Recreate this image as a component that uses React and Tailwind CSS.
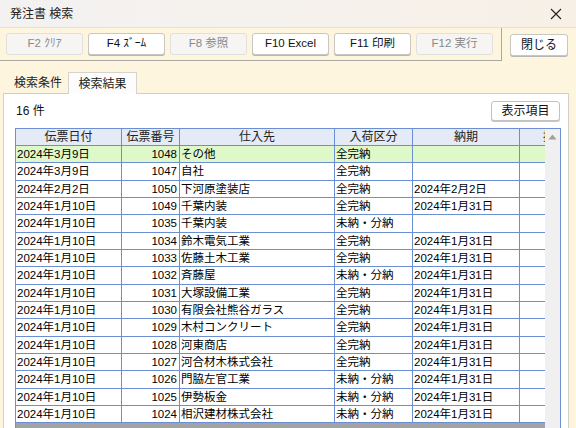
import React from "react";

const rows = [
  ["2024年3月9日", "1048", "その他", "全完納", ""],
  ["2024年3月9日", "1047", "自社", "全完納", ""],
  ["2024年2月2日", "1050", "下河原塗装店", "全完納", "2024年2月2日"],
  ["2024年1月10日", "1049", "千葉内装", "全完納", "2024年1月31日"],
  ["2024年1月10日", "1035", "千葉内装", "未納・分納", ""],
  ["2024年1月10日", "1034", "鈴木電気工業", "全完納", "2024年1月31日"],
  ["2024年1月10日", "1033", "佐藤土木工業", "全完納", "2024年1月31日"],
  ["2024年1月10日", "1032", "斉藤屋", "未納・分納", "2024年1月31日"],
  ["2024年1月10日", "1031", "大塚設備工業", "全完納", "2024年1月31日"],
  ["2024年1月10日", "1030", "有限会社熊谷ガラス", "全完納", "2024年1月31日"],
  ["2024年1月10日", "1029", "木村コンクリート", "全完納", "2024年1月31日"],
  ["2024年1月10日", "1028", "河東商店", "全完納", "2024年1月31日"],
  ["2024年1月10日", "1027", "河合材木株式会社", "全完納", "2024年1月31日"],
  ["2024年1月10日", "1026", "門脇左官工業", "未納・分納", "2024年1月31日"],
  ["2024年1月10日", "1025", "伊勢板金", "未納・分納", "2024年1月31日"],
  ["2024年1月10日", "1024", "相沢建材株式会社", "未納・分納", "2024年1月31日"],
];

const tools = [
  { label: "F2 ｸﾘｱ", off: true },
  { label: "F4 ｽﾞｰﾑ", off: false },
  { label: "F8 参照", off: true },
  { label: "F10 Excel", off: false },
  { label: "F11 印刷", off: false },
  { label: "F12 実行", off: true },
];

function ToolButton({ label, off }) {
  return (
    <div
      className={`w-[77px] h-[22px] flex items-center justify-center rounded-[3px] border text-[11.5px] ${
        off
          ? "bg-[#f6f5f3] border-[#e2e0dc] text-[#8a8a8a]"
          : "bg-white border-[#c9c7c3] text-[#111] shadow-[0_1px_0_#b8b6b2]"
      }`}
    >
      {label}
    </div>
  );
}

export default function App() {
  return (
    <div className="w-[576px] h-[428px] overflow-hidden bg-[#fdf5de] font-['Liberation_Sans','Noto_Sans_CJK_JP',sans-serif] text-[#111]">
      {/* Title bar */}
      <div className="h-[28px] flex items-center justify-between pl-[10px] pr-[14px] bg-gradient-to-r from-[#f3f2f1] to-[#f8f0e7] border-b border-[#e6e1d8]">
        <span className="text-[12px] text-[#222]">発注書 検索</span>
        <svg width="12" height="12" viewBox="0 0 12 12">
          <path d="M1 1L11 11M11 1L1 11" stroke="#222" strokeWidth="1.1" />
        </svg>
      </div>

      {/* Toolbar */}
      <div className="flex">
        <div className="w-[502px] h-[33px] border-r border-b border-[#a9a7a2] flex gap-[5px] pl-[6px] pt-[5px]">
          {tools.map((t) => (
            <ToolButton key={t.label} {...t} />
          ))}
        </div>
        <div className="ml-[8px] mt-[6px] w-[58px] h-[22px] flex items-center justify-center rounded-[3px] border border-[#c9c7c3] bg-white text-[12px] shadow-[0_1px_0_#b8b6b2]">
          閉じる
        </div>
      </div>

      {/* Tabs */}
      <div className="flex items-end h-[32px] pl-[8px]">
        <div className="h-[21px] px-[6px] flex items-center text-[12px] text-[#222]">検索条件</div>
        <div className="h-[22px] w-[69px] flex items-center justify-center text-[12px] text-[#222] bg-[#fcfcfc] border-l border-t border-r border-[#d6d3cc] mb-[-1px] relative z-10">
          検索結果
        </div>
      </div>

      {/* Panel */}
      <div className="ml-[3px] w-[566px] h-[400px] bg-white border-l border-t border-r border-[#d3cfc6] pl-[11px] pr-[6px] pt-[7px]">
        <div className="flex items-center justify-between h-[20px] pr-[2px]">
          <span className="text-[12px] pl-[1px]">16 件</span>
          <div className="w-[69px] h-[20px] flex items-center justify-center rounded-[3px] border border-[#c4c2be] bg-white text-[12px] shadow-[0_1px_0_#c8c6c2]">
            表示項目
          </div>
        </div>

        {/* Grid */}
        <div className="mt-[7px] w-[546px] flex border-l border-t border-r border-[#6b8fd2]">
          <div className="w-[529px] flex flex-col">
            <div className="flex h-[17px] bg-[#e4eaf6] border-b border-[#6b8fd2] text-[12px] text-[#222] leading-[16px]">
              <div className="w-[106px] border-r border-[#6b8fd2] text-center">伝票日付</div>
              <div className="w-[58px] border-r border-[#6b8fd2] text-center">伝票番号</div>
              <div className="w-[155px] border-r border-[#6b8fd2] text-center">仕入先</div>
              <div className="w-[78px] border-r border-[#6b8fd2] text-center">入荷区分</div>
              <div className="w-[107px] border-r border-[#6b8fd2] text-center">納期</div>
              <div className="w-[25px] overflow-hidden relative">
                <span className="absolute left-[23px] top-0 whitespace-nowrap">摘要</span>
              </div>
            </div>
            {rows.map((r, i) => (
              <div
                key={r[1]}
                className={`flex h-[17.33px] border-b border-[#6b8fd2] text-[11.5px] text-black leading-[16px] ${
                  i === 0 ? "bg-[#def8c9]" : "bg-white"
                }`}
              >
                <div className="w-[106px] border-r border-[#6b8fd2] pl-[1px] whitespace-nowrap overflow-hidden">{r[0]}</div>
                <div className="w-[58px] border-r border-[#6b8fd2] pr-[2px] text-right">{r[1]}</div>
                <div className="w-[155px] border-r border-[#6b8fd2] pl-[1px] whitespace-nowrap overflow-hidden">{r[2]}</div>
                <div className="w-[78px] border-r border-[#6b8fd2] pl-[1px] whitespace-nowrap">{r[3]}</div>
                <div className="w-[107px] border-r border-[#6b8fd2] pl-[1px] whitespace-nowrap">{r[4]}</div>
                <div className="w-[25px]" />
              </div>
            ))}
            <div className="h-[20px] bg-[#a3a3a3]" />
          </div>
          <div className="w-[15px] bg-[#f0f0f0] flex justify-center pt-[5px]">
            <svg width="9" height="6" viewBox="0 0 9 6">
              <path d="M4.5 0.5L8.5 5.5H0.5Z" fill="#a0a0a0" />
            </svg>
          </div>
        </div>
      </div>
    </div>
  );
}
